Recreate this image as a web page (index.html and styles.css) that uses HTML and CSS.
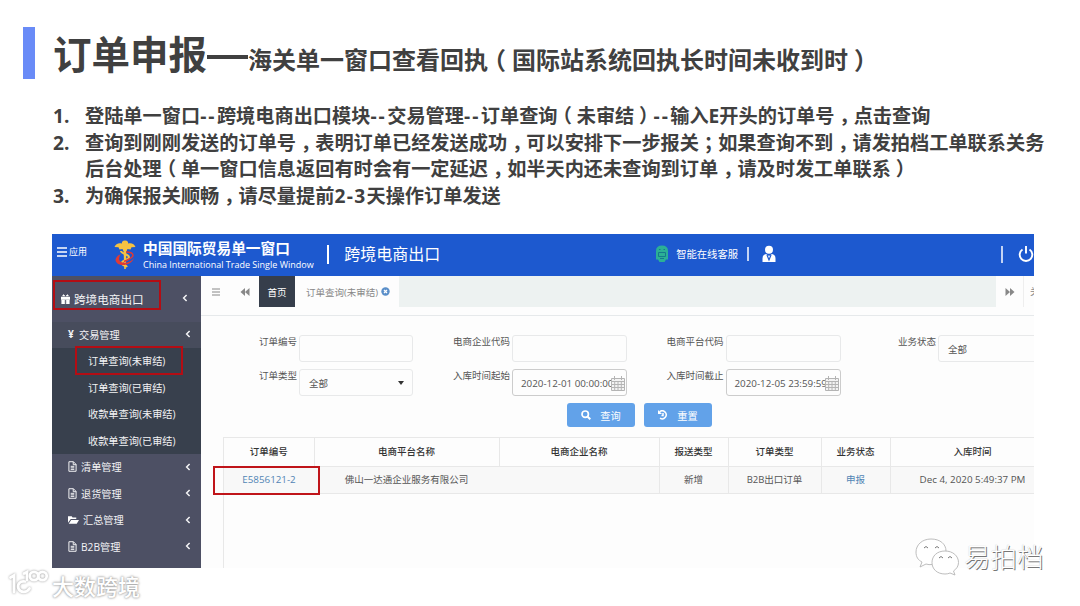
FILE: index.html
```html
<!DOCTYPE html>
<html lang="zh-CN">
<head>
  <meta charset="UTF-8">
  <title>订单申报</title>
  <link rel="stylesheet" href="styles.css">
</head>
<body>
  <svg class="defs" width="0" height="0">
    <symbol id="doc" viewBox="0 0 10 12"><path d="M1 .7h5l3 3v7.600H1zM5.800.7V4H9M3 5.800h4M3 7.500h4M3 9.200h4" fill="none" stroke="currentColor" stroke-width="1.100"/></symbol>
    <symbol id="left" viewBox="0 0 6 8"><path d="M4.600.9 1.600 4l3 3.100" fill="none" stroke="currentColor" stroke-width="1.500"/></symbol>
    <symbol id="calendar" viewBox="0 0 14 15"><path d="M.5 2.500h13v12H.5zM.5 5.500h13M.5 8.500h13M.5 11.500h13M3.700 5v9M7 5v9M10.300 5v9M3.500 0v4M10.500 0v4" fill="#f3f3f3" stroke="#b4b4b4"/></symbol>
  </svg>

  <h1 class="title"><span class="big">订单申报</span><span class="dash"></span><span class="small">海关单一窗口查看回执<i class="mark">（</i>国际站系统回执长时间未收到时<i class="mark">）</i></span></h1>

  <ol class="steps">
    <li><b>1.</b><p>登陆单一窗口<i class="hy">--</i>跨境电商出口模块<i class="hy">--</i>交易管理<i class="hy">--</i>订单查询<i class="mark">（</i>未审结<i class="mark">）</i><i class="hy">--</i>输入E开头的订单号<i class="mark">，</i>点击查询</p></li>
    <li><b>2.</b><p>查询到刚刚发送的订单号<i class="mark">，</i>表明订单已经发送成功<i class="mark">，</i>可以安排下一步报关<i class="mark">；</i>如果查询不到<i class="mark">，</i>请发拍档工单联系关务<br>后台处理<i class="mark">（</i>单一窗口信息返回有时会有一定延迟<i class="mark">，</i>如半天内还未查询到订单<i class="mark">，</i>请及时发工单联系<i class="mark">）</i></p></li>
    <li><b>3.</b><p>为确保报关顺畅<i class="mark">，</i>请尽量提前<span class="days">2-3</span>天操作订单发送</p></li>
  </ol>

  <div class="app">
    <header class="topbar">
      <svg class="bars" width="10" height="10" viewBox="0 0 10 10"><path d="M0 1h10M0 5h10M0 9h10" stroke="#fff" stroke-width="1.500"/></svg>
      <span class="apps">应用</span>
      <svg class="emblem" width="24" height="32" viewBox="0 0 24 32">
        <path d="M12 1.500c2.500 0 3.500 1.500 3 3 3-1 6.500 0 7.500 3.500l-4 .2-1 2.300-3-.6-1 2.100h-3l-1-2.100-3 .6-1-2.300-4-.2C2.500 4.500 6 3.500 9 4.500c-.5-1.500.5-3 3-3z" fill="#f5c242"/>
        <path d="M10.500 8h3l-.7 22h-1.600z" fill="#f5c242"/>
        <path d="M8 12c0 3 8 3 8 6s-7 3-7 6 4 2 5 4" fill="none" stroke="#f5c242" stroke-width="2"/>
        <path d="M8 15c-5 2-7 6-4 9 4 4 15 2 17-5-3 4-9 6-13 4-3-2-2-5 0-8z" fill="#e03a35"/>
        <path d="M13 13c4 0 7 1 7 3.500s-5 4-9 6" fill="none" stroke="#e03a35" stroke-width="1.500"/>
      </svg>
      <div class="brand">
        <div class="brand-cn">中国国际贸易单一窗口</div>
        <div class="brand-en">China International Trade Single Window</div>
      </div>
      <span class="rule tall"></span>
      <span class="module">跨境电商出口</span>
      <svg class="robot" width="14" height="18" viewBox="0 0 14 18">
        <path d="M1 6q0-5.500 6-5.500T13 6v8.500h-2L9.500 17h-5L3 14.500H1z" fill="#2bb095"/>
        <path d="M4 4.500h1.500M8.500 4.500H10M3.500 7.500h7v4h-7zM5 13.500h4" fill="none" stroke="#167a8c"/>
      </svg>
      <span class="service">智能在线客服</span>
      <span class="rule"></span>
      <svg class="user" width="14" height="18" viewBox="0 0 14 18">
        <circle cx="7" cy="4.700" r="4" fill="#fff"/>
        <path d="M.5 17v-3.500Q.5 9.500 4 9l3 2 3-2q3.500.5 3.500 4.500V17z" fill="#fff"/>
        <path d="M5 10l2 5 2-5" fill="none" stroke="#1d59cf" stroke-width="1.200"/>
      </svg>
      <span class="rule last"></span>
      <svg class="power" width="16" height="18" viewBox="0 0 16 18"><path d="M4.500 4.500a6.300 6.300 0 1 0 7 0M8 1v7.500" fill="none" stroke="#fff" stroke-width="1.900"/></svg>
    </header>

    <div class="body">
      <nav class="side">
        <div class="root">
          <span class="root-mark">
            <svg width="9" height="10" viewBox="0 0 9 10"><path d="M0 3h9v2.500H0zM.7 6h3v4h-3zM5.300 6h3v4h-3zM4 2 2.500.5 1.500 2zM5 2 6.500.5 7.500 2z" fill="#fff" stroke="#fff" stroke-width=".5"/></svg>
            跨境电商出口
          </span>
          <svg class="arrow"><use href="#left"/></svg>
        </div>
        <div class="item trade"><span class="yen">¥</span>交易管理<svg class="arrow"><use href="#left"/></svg></div>
        <ul class="sub">
          <li><span class="marked">订单查询(未审结)</span></li>
          <li>订单查询(已审结)</li>
          <li>收款单查询(未审结)</li>
          <li>收款单查询(已审结)</li>
        </ul>
        <div class="item"><svg class="doc"><use href="#doc"/></svg>清单管理<svg class="arrow"><use href="#left"/></svg></div>
        <div class="item"><svg class="doc"><use href="#doc"/></svg>退货管理<svg class="arrow"><use href="#left"/></svg></div>
        <div class="item"><svg class="folder" viewBox="0 0 12 10"><path d="M0 8V1h4l1 1.200h4V4H3zM3.500 5H12L9.500 9.200H.8z" fill="#fff"/></svg>汇总管理<svg class="arrow"><use href="#left"/></svg></div>
        <div class="item"><svg class="doc"><use href="#doc"/></svg>B2B管理<svg class="arrow"><use href="#left"/></svg></div>
      </nav>

      <main class="main">
        <div class="tabs">
          <span class="tool"><svg width="8" height="8" viewBox="0 0 8 8"><path d="M0 1h8M0 4h8M0 7h8" stroke="#888"/></svg></span>
          <span class="tool"><svg width="10" height="8" viewBox="0 0 10 8"><path d="M5 0v8L.5 4zM9.500 0v8L5 4z" fill="#888"/></svg></span>
          <span class="tab home">首页</span>
          <span class="tab page">订单查询(未审结)<svg width="9" height="9" viewBox="0 0 9 9"><circle cx="4.500" cy="4.500" r="4.200" fill="#5b8fc9"/><path d="M3 3l3 3M6 3 3 6" stroke="#fff" stroke-width="1.300"/></svg></span>
          <span class="fill"></span>
          <span class="tool next"><svg width="10" height="8" viewBox="0 0 10 8"><path d="M.5 0v8L5 4zM5 0v8l4.500-4z" fill="#888"/></svg></span>
          <span class="more">关</span>
        </div>

        <section class="panel">
          <div class="form">
            <label>订单编号</label><div class="input"></div>
            <label>电商企业代码</label><div class="input"></div>
            <label>电商平台代码</label><div class="input"></div>
            <label>业务状态</label><div class="input">全部</div>
            <label>订单类型</label><div class="input">全部<span class="caret"></span></div>
            <label>入库时间起始</label><div class="input date"><span>2020-12-01 00:00:00</span><svg><use href="#calendar"/></svg></div>
            <label>入库时间截止</label><div class="input date"><span>2020-12-05 23:59:59</span><svg><use href="#calendar"/></svg></div>
          </div>
          <div class="buttons">
            <button class="btn"><svg width="10" height="10" viewBox="0 0 10 10"><path d="M6.700 6.700 9.300 9.300" stroke="#fff" stroke-width="2"/><circle cx="4.200" cy="4.200" r="3.200" fill="none" stroke="#fff" stroke-width="1.700"/></svg>查询</button>
            <button class="btn"><svg width="10" height="10" viewBox="0 0 10 10"><path d="M1.500 1.800A4 4 0 1 1 2 8.200M5 3v2.500H3.500" fill="none" stroke="#fff" stroke-width="1.500"/><path d="M0 0v4h4z" fill="#fff"/></svg>重置</button>
          </div>
          <div class="grid">
            <table>
              <colgroup><col class="c1"><col class="c2"><col class="c3"><col class="c4"><col class="c5"><col class="c6"><col class="c7"></colgroup>
              <thead>
                <tr><th>订单编号</th><th>电商平台名称</th><th>电商企业名称</th><th>报送类型</th><th>订单类型</th><th>业务状态</th><th>入库时间</th></tr>
              </thead>
              <tbody>
                <tr><td class="link number">E5856121-2</td><td class="open-cell">佛山一达通企业服务有限公司</td><td></td><td>新增</td><td>B2B出口订单</td><td class="link">申报</td><td class="time">Dec 4, 2020 5:49:37 PM</td></tr>
              </tbody>
            </table>
          </div>
        </section>
      </main>
    </div>
  </div>

  <div class="wechat">
    <svg width="46" height="38" viewBox="0 0 46 38">
      <g fill="#fff" stroke="#b5b5b5" stroke-width=".9">
        <path d="M17 1C8 1 2 7 2 14c0 5 2 8 6 10l-2 5 6-3q3 1 6 .5C30 26 32 20 32 13S26 1 17 1z"/>
        <path d="M31 13c-8 0-13 5-13 11.500S23 36 31 36q3 0 5-1l5 2-1.500-4c3-2 5-5 5-8.500C44.500 18 39 13 31 13z"/>
      </g>
      <path d="M10 10q2-3 4 0M21 10q2-3 4 0M25 20q2-3 4 0M34 20q2-3 4 0" fill="none" stroke="#777"/>
    </svg>
    <span>易拍档</span>
  </div>

  <div class="site">
    <svg width="42" height="30" viewBox="0 0 42 30">
      <g fill="none" stroke="#fff" stroke-width="2.800" stroke-linecap="round">
        <path d="M3.500 9.500 7 7.500V24M18 13.500c-5-1-8 3-6.500 7 1.500 4 8 5 11 0"/>
        <path d="M17 5.500 20 4v8"/><circle cx="27" cy="8" r="4.200"/><circle cx="35.500" cy="8" r="4.200"/>
      </g>
    </svg>
    <span>大数跨境</span>
  </div>
</body>
</html>
```

FILE: styles.css
```css
* {
  box-sizing: border-box;
}

body {
  margin: 0;
  width: 1080px;
  height: 606px;
  overflow: hidden;
  position: relative;
  background: #fff;
  color: #404040;
  font-family: "Open Sans", "Noto Sans CJK SC", sans-serif;
}

svg {
  display: block;
  flex: none;
}

.defs {
  position: absolute;
}

i {
  font-style: normal;
  line-height: 0;
}

/* Título */
.title {
  display: flex;
  align-items: center;
  height: 52px;
  margin: 27px 0 0 23px;
  padding-left: 18px;
  border-left: 12px solid #698bf7;
  white-space: nowrap;
}

.big {
  font-size: 38.500px;
  line-height: 52px;
  padding-top: 2px;
}

.dash {
  width: 41px;
  height: 4px;
  margin-top: 7px;
  background: #404040;
}

.small {
  font-size: 24px;
  line-height: 40px;
  padding-top: 14px;
}

/* Puntuación china centrada en su caja */
.mark {
  margin: 0 .25em;
  font-family: "Noto Sans CJK SC", sans-serif;
  font-feature-settings: "halt";
}

.steps {
  list-style: none;
  height: 108px;
  margin: 24px 0 0 53px;
  padding: 0;
  font-size: 19.200px;
  font-weight: bold;
  line-height: 26.500px;
  white-space: nowrap;
}

.steps li {
  display: flex;
}

.steps b {
  width: 32px;
  font-weight: 700;
}

.steps p {
  margin: 0;
}

.hy {
  display: inline-block;
  width: 16.800px;
  letter-spacing: 2px;
}

.days {
  letter-spacing: 1.300px;
}

/* Aplicación */
.app {
  width: 982px;
  height: 334px;
  margin: 23px 0 0 52px;
  overflow: hidden;
  background: #fdfdfd;
  font-size: 9.500px;
}

.topbar {
  display: flex;
  align-items: center;
  height: 42px;
  padding: 0 0 4px 5px;
  background: #1d59cf;
  color: #fff;
  white-space: nowrap;
}

.bars {
  margin-bottom: 3px;
}

.apps {
  width: 18px;
  margin-left: 2px;
  padding-bottom: 3px;
  font-size: 9px;
}

.emblem {
  margin: 4px 0 0 26px;
}

.brand {
  width: 187px;
  margin: 4px 0 0 4px;
  padding-left: 2px;
}

.brand-cn {
  font-size: 14.700px;
  font-weight: bold;
  line-height: 18px;
}

.brand-en {
  font-size: 9px;
  line-height: 15px;
}

.rule {
  width: 2px;
  height: 14px;
  margin-top: 2px;
  background: #c3d3f4;
}

.tall {
  height: 19px;
  background: #fff;
}

.module {
  width: 96px;
  margin-left: 15px;
  font-size: 16px;
}

.robot {
  margin-left: 215px;
  margin-top: 2px;
}

.service {
  width: 62px;
  margin: 0 9px 0 7px;
  font-size: 10.300px;
}

.user {
  margin: 2px 225px 0 13px;
}

.last {
  height: 17px;
}

.power {
  margin-left: 15px;
  margin-top: 2px;
}

.body {
  display: flex;
  height: 292px;
}

/* Menú lateral */
.side {
  flex: none;
  width: 149px;
  background: #4d5064;
  color: #f3f3f5;
  font-size: 10.200px;
  white-space: nowrap;
}

.root {
  display: flex;
  align-items: flex-start;
  height: 45.500px;
  padding: 4px 0 0 1px;
}

.root-mark {
  display: flex;
  align-items: center;
  gap: 4px;
  width: 108px;
  height: 30px;
  padding: 7px 0 0 6px;
  border: 2px solid #b40d14;
  font-size: 11.600px;
}

.arrow {
  width: 6px;
  height: 8px;
  margin-left: auto;
  margin-right: 10px;
}

.root .arrow {
  margin-top: 14px;
  margin-right: 13px;
}

.item {
  display: flex;
  align-items: center;
  height: 26.500px;
  padding: 0 0 1px 16px;
}

.trade {
  background: #474c5c;
}

.yen {
  width: 11px;
  font-weight: bold;
}

.doc {
  width: 9px;
  height: 11px;
  margin-right: 4px;
}

.folder {
  width: 11px;
  height: 10px;
  margin-right: 4px;
}

.sub {
  height: 106px;
  margin: 0;
  padding: 0;
  list-style: none;
  background: #38404d;
}

.sub li {
  display: flex;
  align-items: center;
  height: 26.500px;
  padding: 0 0 1px 36px;
}

.marked {
  flex: none;
  width: 108px;
  height: 29px;
  margin-left: -13px;
  padding-left: 11px;
  border: 2px solid #b40d14;
  line-height: 27px;
}

/* Pestañas */
.main {
  flex: none;
  width: 833px;
}

.tabs {
  display: flex;
  height: 31px;
  color: #888;
  white-space: nowrap;
}

.tabs > span {
  flex: none;
}

.tool {
  display: flex;
  align-items: center;
  justify-content: center;
  width: 29px;
}

.tab {
  display: flex;
  align-items: center;
  justify-content: center;
}

.home {
  width: 36px;
  background: #363e4b;
  color: #fff;
}

.page {
  gap: 3px;
  width: 104px;
  padding-left: 2px;
}

.fill {
  width: 597px;
  background: #edf2f1;
}

.next {
  width: 28px;
  border-right: 1px solid #eee;
}

.more {
  padding-left: 6px;
  line-height: 31px;
}

/* Formulario */
.panel {
  height: 253px;
  margin-top: 8px;
  border-top: 1px solid #e6e9eb;
}

.form {
  display: grid;
  grid-template-columns: 96px 114px 95px 115px 94.500px 115px 93.500px 115px;
  grid-template-rows: 27px 27px;
  column-gap: 2px;
  row-gap: 7.500px;
  width: 860px;
  padding-top: 18.500px;
  color: #555;
}

.form label {
  text-align: right;
  line-height: 14px;
  white-space: nowrap;
}

.input {
  display: flex;
  align-items: center;
  padding: 1px 8px 0 9px;
  border: 1px solid #e8e9ea;
  border-radius: 3px;
}

.caret {
  margin-left: auto;
  border: 3px solid transparent;
  border-top: 4px solid #333;
  border-bottom: 0;
}

.date {
  border-color: #ccc;
  padding-right: 1px;
  padding-left: 8px;
  white-space: nowrap;
}

.date span {
  width: 90px;
  font-size: 9.800px;
}

.date svg {
  position: relative;
  width: 14px;
  height: 15px;
}

.buttons {
  display: flex;
  gap: 9px;
  height: 24px;
  margin: 7px 0 0 366px;
}

.btn {
  display: flex;
  align-items: center;
  justify-content: center;
  gap: 9px;
  width: 68px;
  height: 24px;
  padding: 0;
  border: none;
  border-radius: 3px;
  background: #62a2e9;
  color: #fff;
  font: inherit;
  font-size: 10.200px;
}

/* Tabla de resultados */
.grid {
  height: 140px;
  margin: 10px 0 0 22px;
  border-left: 1px solid #e8e8e8;
}

table {
  width: 831px;
  table-layout: fixed;
  border-collapse: collapse;
}

.c1 { width: 90px; }
.c2 { width: 185px; }
.c3 { width: 160px; }
.c4 { width: 69px; }
.c5 { width: 93px; }
.c6 { width: 69px; }
.c7 { width: 165px; }

th, td {
  height: 27px;
  padding: 0;
  border: 1px solid #e8e8e8;
  border-left: 0;
  text-align: center;
  font-weight: normal;
  line-height: 14px;
  color: #555;
  white-space: nowrap;
}

th {
  height: 29px;
  font-weight: 500;
  color: #333;
}

td {
  background: #f8f8f8;
}

td.open-cell {
  border-right: 0;
}

td.link {
  color: #5285b5;
}

td.number {
  position: relative;
  border-right: 0;
  font-size: 9.800px;
}

td.time {
  font-size: 9.800px;
}

/* Marco rojo alrededor del número */
.number::after {
  content: "";
  position: absolute;
  left: -11px;
  top: -1px;
  width: 103px;
  height: 25px;
  border: 2px solid #c0151a;
}

/* Marcas de agua */
.wechat {
  position: absolute;
  left: 914px;
  top: 537px;
  display: flex;
  align-items: center;
  gap: 4px;
  color: #fff;
  font-size: 26.500px;
  font-weight: 300;
  line-height: 40px;
  text-shadow: 1px 1px 0 #777, 0 0 1px #bbb;
}

.site {
  position: absolute;
  left: 7px;
  top: 568px;
  display: flex;
  gap: 3px;
  color: #fff;
  font-size: 22px;
  font-weight: 500;
  line-height: 36px;
  text-shadow: 0 0 2px #999, 0 0 3px #aaa;
}

.site svg {
  filter: drop-shadow(0 0 1px #999);
}
```
